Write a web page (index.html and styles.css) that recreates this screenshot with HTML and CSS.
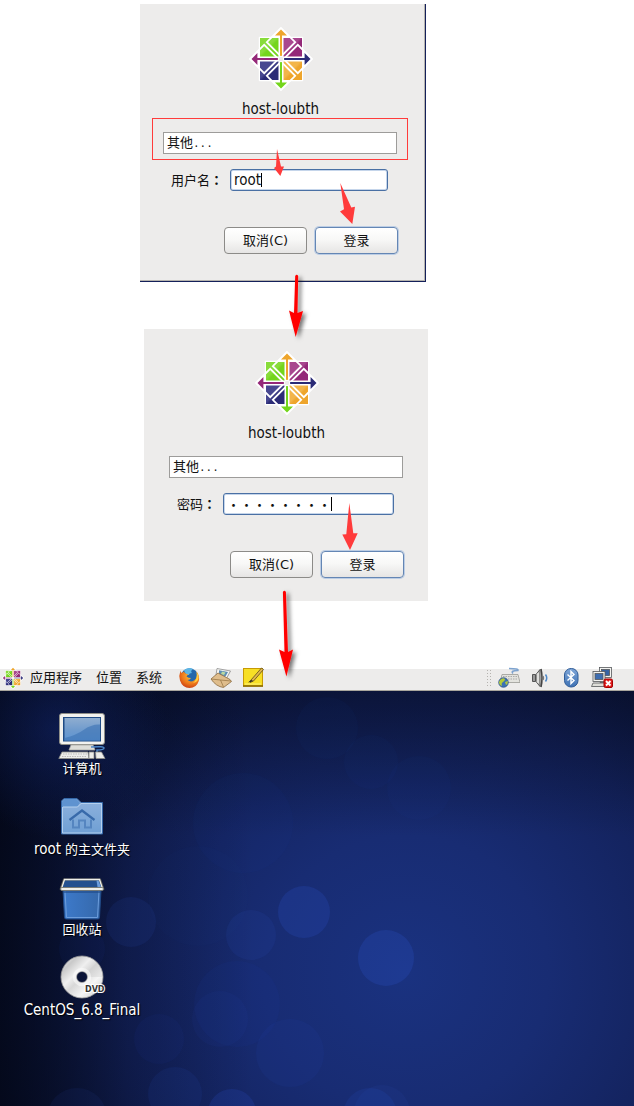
FILE: index.html
```html
<!DOCTYPE html>
<html lang="zh-CN">
<head>
<meta charset="utf-8">
<meta name="viewport" content="width=device-width, initial-scale=1">
<title>host-loubth</title>
<link rel="stylesheet" href="styles.css">
</head>
<body>
<svg class="defs" width="0" height="0" aria-hidden="true">
  <defs>
    <linearGradient id="g-green" x1="0" y1="0" x2="1" y2="1"><stop offset="0.45" stop-color="#88dc3a"/><stop offset="0.55" stop-color="#74d51c"/></linearGradient>
    <linearGradient id="g-purple" x1="0" y1="0" x2="1" y2="1"><stop offset="0.45" stop-color="#a8478f"/><stop offset="0.55" stop-color="#942878"/></linearGradient>
    <linearGradient id="g-navy" x1="0" y1="0" x2="1" y2="1"><stop offset="0.45" stop-color="#474790"/><stop offset="0.55" stop-color="#2b2b76"/></linearGradient>
    <linearGradient id="g-orange" x1="0" y1="0" x2="1" y2="1"><stop offset="0.45" stop-color="#f3b54a"/><stop offset="0.55" stop-color="#eea52c"/></linearGradient>
    <symbol id="centos" viewBox="-32 -32 64 64">
      <g fill="#fff" stroke="#fff" stroke-width="1.4" stroke-linejoin="round">
        <rect x="-21.5" y="-21.5" width="43" height="43"/>
        <path d="M0-30.5 30.5 0 0 30.5-30.5 0Z"/>
      </g>
      <rect x="-21" y="-21" width="18.5" height="18.5" fill="url(#g-green)"/>
      <rect x="2.5" y="-21" width="18.5" height="18.5" fill="url(#g-purple)"/>
      <rect x="-21" y="2.5" width="18.5" height="18.5" fill="url(#g-navy)"/>
      <rect x="2.5" y="2.5" width="18.5" height="18.5" fill="url(#g-orange)"/>
      <g fill="none" stroke="#fff" stroke-width="1.8">
        <path d="M0-31-14.2-16.8 0-2.6 14.2-16.8Z"/>
        <path d="M0 31-14.2 16.8 0 2.6 14.2 16.8Z"/>
        <path d="M-31 0-16.8-14.2-2.6 0-16.8 14.2Z"/>
        <path d="M31 0 16.8-14.2 2.6 0 16.8 14.2Z"/>
      </g>
      <path fill="#eea52c" d="M0-29.5 6-23.6H1V-3h-2v-20.6h-5Z"/>
      <path fill="#74d51c" d="M0 29.5 6 23.6H1V3h-2v20.6h-5Z"/>
      <path fill="#942878" d="M-29.5 0-23.6-6v5H-3v2h-20.6v5Z"/>
      <path fill="#2b2b76" d="M29.5 0 23.6-6v5H3v2h20.6v5Z"/>
      <circle r="2.8" fill="#edeceb" stroke="#fff"/>
    </symbol>
    <linearGradient id="g-screen" x1="0" y1="0" x2="0" y2="1"><stop offset="0" stop-color="#8fadd0"/><stop offset="0.55" stop-color="#6f9bcd"/><stop offset="1" stop-color="#5d95d4"/></linearGradient>
    <linearGradient id="g-folder" x1="0" y1="0" x2="0" y2="1"><stop offset="0" stop-color="#8fb2dd"/><stop offset="1" stop-color="#6f9fd4"/></linearGradient>
    <linearGradient id="g-bin" x1="0" y1="0" x2="1" y2="0"><stop offset="0" stop-color="#3d7acb"/><stop offset="1" stop-color="#3568aa"/></linearGradient>
    <linearGradient id="g-disc" x1="0" y1="0" x2="1" y2="1"><stop offset="0" stop-color="#f4f4f4"/><stop offset="0.2" stop-color="#c9c9c9"/><stop offset="0.38" stop-color="#efefef"/><stop offset="0.5" stop-color="#d8d8d8"/><stop offset="0.7" stop-color="#f5f5f5"/><stop offset="1" stop-color="#c4c4c4"/></linearGradient>
    <radialGradient id="g-fox" cx="0.6" cy="0.3" r="0.75"><stop offset="0" stop-color="#ffc53a"/><stop offset="0.6" stop-color="#ee7a1c"/><stop offset="1" stop-color="#c93b14"/></radialGradient>
    <linearGradient id="g-bt" x1="0" y1="0" x2="0" y2="1"><stop offset="0" stop-color="#7ea6d8"/><stop offset="1" stop-color="#3f72b4"/></linearGradient>
    <filter id="shadow" x="-100%" y="-10%" width="400%" height="130%"><feDropShadow dx="3" dy="2" stdDeviation="2" flood-color="#000" flood-opacity="0.55"/></filter>
  </defs>
</svg>

<main class="flow">
  <form class="dialog dialog-framed" onsubmit="return false">
    <svg class="logo" aria-hidden="true"><use href="#centos"/></svg>
    <h1 class="host">host-loubth</h1>
    <div class="user-pick marked">
      <button class="user-list" type="button">其他<span class="dots">...</span></button>
    </div>
    <div class="field-row">
      <label for="user">用户名<span class="colon" lang="zh-TW">：</span></label>
      <div class="field field-user">
        <input id="user" class="latin" type="text" value="root">
        <span class="caret caret-user"></span>
      </div>
    </div>
    <div class="actions">
      <button class="btn" type="button">取消(C)</button>
      <button class="btn btn-default" type="submit">登录</button>
    </div>
  </form>

  <form class="dialog" onsubmit="return false">
    <svg class="logo" aria-hidden="true"><use href="#centos"/></svg>
    <h2 class="host">host-loubth</h2>
    <div class="user-pick">
      <button class="user-list" type="button">其他<span class="dots">...</span></button>
    </div>
    <div class="field-row">
      <label for="pass">密码<span class="colon" lang="zh-TW">：</span></label>
      <div class="field field-pass">
        <input id="pass" class="secret" type="password" value="・・・・・・・・">
        <span class="caret caret-pass"></span>
      </div>
    </div>
    <div class="actions">
      <button class="btn" type="button">取消(C)</button>
      <button class="btn btn-default" type="submit">登录</button>
    </div>
  </form>

  <svg class="arrows" viewBox="0 0 634 700" aria-hidden="true">
    <g fill="#ff3b3b">
      <path d="M277 149 276 166.500 274 168 280.300 176 284 166.500 281 166.500Z"/>
      <path d="M340.300 183 344 209.300 340 211.500 352.300 224 355 206.700 351.300 207.500Z"/>
      <path d="M349.300 503 346.300 534.300 342.300 534.500 350 550 357.700 533.300 353.300 533.300Z"/>
    </g>
    <g fill="#f00" filter="url(#shadow)">
      <path d="M295.200 276q1.500-2.500 3 0L297.500 313 303 311 295.700 337 289 310.500 294 313Z"/>
      <path d="M282.900 592q1.500-2.500 3 0L288 652 293 649.500 286.400 676.500 279 649.500 284.500 652Z"/>
    </g>
  </svg>
</main>

<section class="session">
  <header class="panel">
    <nav class="menus">
      <svg class="menu-logo" aria-hidden="true"><use href="#centos"/></svg>
      <button class="menu" type="button">应用程序</button>
      <button class="menu" type="button">位置</button>
      <button class="menu" type="button">系统</button>
    </nav>
    <div class="launchers">
      <button class="launch" type="button" aria-label="Firefox">
        <svg viewBox="0 0 22 22"><circle cx="11.500" cy="10" r="8.800" fill="#2467ab"/><path d="M6 3q5-3.500 9-1-3 2-1 4-3 0-3 2-4 0-5-5z" fill="#5db5e4"/><path d="M2.500 3.500q-2 5-.5 10Q4.500 21 11.500 21 18.500 21 20.800 14 22 9 18.500 4.500 20 11 16 13.500 12.500 15.500 9.500 13 12 13 13 11 10.500 11 8.500 9.500 9 8 11 7.500 7 7 6 4.500 4.500 5 4 6 2.500 5.500 2.500 3.500Z" fill="url(#g-fox)"/><path d="M18.500 5Q20 12 15 16 18 16 20 13 21.500 8 18.500 5Z" fill="#ffcb3f"/></svg>
      </button>
      <button class="launch" type="button" aria-label="Mail">
        <svg viewBox="0 0 22 22"><path d="M7 1.500 20.500 4 16.500 11.500 6 8Z" fill="#f5f5f2" stroke="#8d8d8d" stroke-width=".8"/><path d="M9 3.200 18 5 15.500 9.500 9 7.500Z" fill="#5d8db5"/><path d="M12 4.500 15.500 5.500 14 8 11 7Z" fill="#b9d9a0"/><path d="M1 12 8 6 20 12.500 21.500 14.500 13.500 20.500Q6 19.500 1 12Z" fill="#dfbd8c" stroke="#8a6a3d" stroke-width=".8"/><path d="M1 12 10.500 13 21 14M10.500 13 13.500 20" fill="none" stroke="#9a7848" stroke-width=".8"/></svg>
      </button>
      <button class="launch" type="button" aria-label="Notes">
        <svg viewBox="0 0 22 22"><rect x="1.500" y="1.500" width="19" height="17.500" fill="#f7df25" stroke="#c79a04"/><path d="M1 19h20" stroke="#8b6b00" stroke-width="1.600"/><path d="M3 17h16" stroke="#fff27c"/><path d="M9 13 19.500 1 21.500 2.500 11.500 14 8 15.500Z" fill="#e0b64a" stroke="#5c4a1c" stroke-width=".8"/><path d="M6 15.500 9 13 11.500 14Z" fill="#222"/></svg>
      </button>
    </div>
    <div class="tray">
      <span class="grip"></span>
      <button class="launch" type="button" aria-label="Input method">
        <svg viewBox="0 0 22 22"><path d="M11 1.500q10 0 9 2-8 0-5 3" fill="none" stroke="#7da3cf" stroke-width="1.500"/><path d="M4 7.500h16l2 8H2z" fill="#e3e3de" stroke="#9b9b96" stroke-width=".8"/><path d="M5 9.500h15M5 12h15" stroke="#aaa" stroke-width="1.200" stroke-dasharray="1.500 1"/><circle cx="5.500" cy="15.500" r="4.800" fill="#3b72b5" stroke="#294f82" stroke-width=".7"/><path d="M2 13q3-3 5-1 0 2-2 3t-1 4q-3-1-3-4zM7 15l3-1q0 3-2 4z" fill="#b2c93c"/></svg>
      </button>
      <button class="launch" type="button" aria-label="Volume">
        <svg viewBox="0 0 22 22"><path d="M3.500 7.500h3V14.500h-3Z" fill="#999" stroke="#555"/><path d="M7 7.500 11 2.500v17L7 14.500Z" fill="#c8c8c4" stroke="#555" stroke-linejoin="round"/><path d="M9 6v10" stroke="#f5f5f5"/><path d="M12 2q2 9 0 18" fill="none" stroke="#444" stroke-width="1.600"/><path d="M14 9q1 2 0 4" fill="none" stroke="#777" stroke-width="1.500"/><path d="M16.500 7.500q2.500 3.500 0 7" fill="none" stroke="#4e88c7" stroke-width="1.500"/></svg>
      </button>
      <button class="launch" type="button" aria-label="Bluetooth">
        <svg viewBox="0 0 22 22"><rect x="4.500" y="1.500" width="13.500" height="18.500" rx="6.500" fill="url(#g-bt)" stroke="#2f5c98"/><path d="M7.500 7.500 14 13.500 11 16.500V4.500L14 7.500 7.500 13.500" fill="none" stroke="#fff" stroke-width="1.400"/></svg>
      </button>
      <button class="launch" type="button" aria-label="Network disconnected">
        <svg viewBox="0 0 22 22"><g stroke="#55585a" stroke-width=".8"><rect x="8.500" y="0.500" width="12" height="10" fill="#f3f3f0"/><rect x="10.500" y="2.500" width="8" height="6" fill="#3563a5"/><path d="M11 12.500h9l1 3H9z" fill="#deded9"/><rect x="2" y="4.500" width="12" height="10" fill="#f3f3f0"/><rect x="4" y="6.500" width="8" height="6" fill="#3e6db0"/><path d="M2 16h12l2 3.500H.5z" fill="#deded9"/></g><rect x="13" y="12" width="8.500" height="8.500" rx="1.500" fill="#e01b1b" stroke="#a40000"/><path d="M15 14 19.500 18.500M19.500 14 15 18.500" stroke="#fff" stroke-width="1.800"/></svg>
      </button>
    </div>
  </header>

  <div class="desktop">
    <svg class="bokeh" viewBox="0 0 634 415" preserveAspectRatio="xMinYMin slice" aria-hidden="true">
      <g fill="#2f55d0">
        <circle cx="304" cy="221" r="26" opacity=".2"/>
        <circle cx="386" cy="267" r="28" opacity=".22"/>
        <circle cx="251" cy="244" r="25" opacity=".1"/>
        <circle cx="131" cy="231" r="25" opacity=".1"/>
        <circle cx="237" cy="313" r="43" opacity=".05"/>
        <circle cx="220" cy="328" r="28" opacity=".06"/>
        <circle cx="290" cy="362" r="34" opacity=".07"/>
        <circle cx="175" cy="403" r="27" opacity=".09"/>
        <circle cx="232" cy="422" r="24" opacity=".18"/>
        <circle cx="370" cy="424" r="27" opacity=".13"/>
        <circle cx="382" cy="422" r="28" opacity=".08"/>
        <circle cx="159" cy="348" r="25" opacity=".05"/>
        <circle cx="77" cy="427" r="30" opacity=".08"/>
        <circle cx="82" cy="258" r="23" opacity=".05"/>
        <circle cx="243" cy="132" r="50" opacity=".03"/>
        <circle cx="198" cy="205" r="50" opacity=".02"/>
        <circle cx="327" cy="37" r="31" opacity=".03"/>
        <circle cx="371" cy="71" r="27" opacity=".03"/>
        <circle cx="419" cy="97" r="32" opacity=".03"/>
      </g>
    </svg>
    <div class="icons">
      <button class="shortcut" type="button">
        <svg class="shortcut-icon" viewBox="0 0 48 48" aria-hidden="true"><rect x="1.500" y="1.500" width="45" height="31" rx="2.500" fill="#f2f2ef" stroke="#8e8e88"/><rect x="5" y="5" width="38" height="24.500" fill="#1f4b85"/><rect x="6.500" y="6" width="35.500" height="22.500" fill="url(#g-screen)"/><path d="M6.500 26q12-3 19-8 8-6 16.500-5.500v16H6.500z" fill="#3f75b5" opacity=".65"/><path d="M13 33h22l2 5H11z" fill="#deded9" stroke="#a8a8a2" stroke-width=".8"/><path d="M33 35q13-1 13 1t-7 2v4" fill="none" stroke="#4c86c8" stroke-width="1.500"/><path d="M4 40h26l1 6.500H.8z" fill="#ededea" stroke="#8e8e88" stroke-width=".8"/><path d="M5 42h24M4 44.500h25" stroke="#bbb" stroke-width="1" stroke-dasharray="1.500 1"/><path d="M31 40h5v6.500h-5zM37.500 40h6l3.500 6.500h-9z" fill="#ededea" stroke="#8e8e88" stroke-width=".8"/></svg>
        <span>计算机</span>
      </button>
      <button class="shortcut" type="button">
        <svg class="shortcut-icon" viewBox="0 0 48 48" aria-hidden="true"><path d="M3.500 15 3.500 9 6 6.500h13L23 10.500h21.500v31.500h-41z" fill="url(#g-folder)" stroke="#3568a8"/><path d="M4 14V9.500L6.500 7h12L22 11 19 15H4z" fill="#5f93d0"/><path d="M5 15H19.500L23 11.500H43.500V41H4.500V15" fill="none" stroke="#b5d0ee"/><path d="M11.500 28 24 18.500 36.500 28" fill="none" stroke="#386aaa" stroke-width="2.200"/><path d="M15 27.500v8h6v-7h6v7h6v-8" fill="none" stroke="#5585c0" stroke-width="2"/></svg>
        <span><span class="latin">root</span> 的主文件夹</span>
      </button>
      <button class="shortcut" type="button">
        <svg class="shortcut-icon" viewBox="0 0 48 48" aria-hidden="true"><path d="M5 17h38l-1.500 27.500q0 1.500-2 1.500h-31q-2 0-2-1.500z" fill="url(#g-bin)" stroke="#204a87"/><path d="M7 18 8.500 44.500h31L41 18" fill="none" stroke="#6c9ddc"/><path d="M5 17h38v3H5z" fill="#204a87" opacity=".6"/><path d="M6 6.500h36l3 9h-42z" fill="#23508f" stroke="#5c5c55" stroke-width="2.200"/><path d="M6.500 6.500h35l3 9h-41z" fill="none" stroke="#efefea" stroke-width="1.300"/><path d="M38.500 7.500 40.500 7.500 43 14H39.500z" fill="#6c9ddc"/><rect x="2.500" y="14.500" width="43" height="3" rx="1.500" fill="#efefea" stroke="#6e6e66" stroke-width=".8"/></svg>
        <span>回收站</span>
      </button>
      <button class="shortcut" type="button">
        <svg class="shortcut-icon" viewBox="0 0 48 48" aria-hidden="true"><path fill-rule="evenodd" d="M24 3a21 21 0 1 1 0 42 21 21 0 1 1 0-42zM24 18.500a5.500 5.500 0 1 0 0 11 5.500 5.500 0 1 0 0-11z" fill="url(#g-disc)" stroke="#9a9a9a" stroke-width=".8"/><path d="M28.500 20 39 9.500A21 21 0 0 1 45 24L30 24Z" fill="#bdbdbd" opacity=".25"/><circle cx="24" cy="24" r="7.500" fill="none" stroke="#fff" stroke-width="3.500" opacity=".5"/><text class="disc-tag" x="27" y="39">DVD</text></svg>
        <span class="latin">CentOS_6.8_Final</span>
      </button>
    </div>
  </div>
</section>
</body>
</html>
```
FILE: styles.css
```css
*, *::before, *::after {
  box-sizing: border-box;
}

body {
  margin: 0;
  min-height: 100vh;
  display: flex;
  flex-direction: column;
  background: #fff;
  color: #111;
  font: 13px/18px "DejaVu Sans", "Noto Sans CJK SC", sans-serif;
}

button, input {
  font: inherit;
  color: inherit;
}

.defs {
  position: absolute;
}

.flow {
  position: relative;
  display: flex;
  flex-direction: column;
  align-items: flex-start;
  gap: 47px;
  padding: 4px 0 68px 140px;
}

.arrows {
  position: absolute;
  top: 0;
  left: 0;
  width: 634px;
  pointer-events: none;
  z-index: 2;
}

/* login dialogs */
.dialog {
  display: flex;
  flex-direction: column;
  width: 284px;
  margin-left: 4px;
  padding: 22px 24px 23px 25px;
  background: #edeceb;
}

.dialog-framed {
  width: 286px;
  margin-left: 0;
  padding: 23px 27px 27px 23px;
  border: solid #14205a;
  border-width: 0 1px 1px 0;
  box-shadow: inset -1px -1px 0 #b5b3ae;
}

.logo {
  align-self: center;
  width: 64px;
  height: 64px;
}

.host, .latin, .field .latin {
  font-family: "DejaVu Sans Condensed", "DejaVu Sans", sans-serif;
  font-size: 15px;
}

.host {
  margin: 9px 0 14px;
  text-align: center;
  font-weight: normal;
  line-height: 18px;
}

.user-pick {
  position: relative;
  margin-right: 1px;
}

.marked::before {
  content: "";
  position: absolute;
  inset: -14px -11px -6px;
  border: 1px solid #ff3b3b;
}

.user-list {
  display: block;
  position: relative;
  width: 100%;
  height: 22px;
  padding: 0 3px;
  border: 1px solid #9d9c9a;
  background: #fff;
  text-align: left;
}

.dots {
  font: 11px/18px "Liberation Mono", monospace;
}

.field-row {
  display: flex;
  align-items: center;
  gap: 7px;
  margin: 15px 10px 36px 8px;
}

.colon {
  font-family: "Noto Sans CJK TC", sans-serif;
  font-weight: bold;
}

.field {
  position: relative;
  flex: 1;
}

.field input {
  display: block;
  width: 100%;
  height: 22px;
  padding: 0 3px;
  border: 1px solid #4a70a4;
  border-radius: 3px;
  background: #fff;
  box-shadow: inset 0 0 0 1px #c5d5ea;
  outline: 0;
}

.field .secret {
  font-family: "Noto Sans CJK SC", sans-serif;
  -webkit-text-security: none;
}

.caret {
  position: absolute;
  top: 4px;
  width: 1px;
  height: 14px;
  background: #000;
}

.caret-user {
  left: 31px;
}

.caret-pass {
  left: 108px;
}

.actions {
  display: flex;
  justify-content: flex-end;
  gap: 8px;
}

.btn {
  width: 83px;
  height: 27px;
  padding: 0;
  border: 1px solid #8c8b88;
  border-radius: 4px;
  background: linear-gradient(#fff, #f8f8f7 45%, #e6e5e4);
}

.btn-default {
  border-color: #6486b4;
  box-shadow: 0 0 0 1px #bccde4;
}

/* desktop session */
.session {
  flex: 1;
  display: flex;
  flex-direction: column;
}

.panel {
  display: flex;
  align-items: center;
  height: 22px;
  padding: 0 21px 3px 2px;
  border-bottom: 1px solid #a9a69d;
  background: #edeceb;
}

.menus {
  display: flex;
  align-items: center;
  gap: 14px;
}

.menu-logo {
  width: 22px;
  height: 22px;
  margin-right: -8px;
}

.menu, .launch, .shortcut {
  padding: 0;
  border: 0;
  background: none;
}

.launchers {
  display: flex;
  gap: 10px;
  margin-left: 16px;
}

.launch {
  width: 22px;
  height: 22px;
}

.launch svg {
  display: block;
  width: 22px;
  height: 22px;
}

.tray {
  display: flex;
  align-items: center;
  gap: 9px;
  margin-left: auto;
}

.grip {
  width: 6px;
  height: 18px;
  margin-right: -3px;
  background: radial-gradient(circle, #b5b3af 1px, transparent 1px) 0 0 / 3px 3px;
}

.desktop {
  position: relative;
  flex: 1;
  min-height: 415px;
  overflow: hidden;
  background:
    radial-gradient(circle at 9% 9%, rgba(20, 42, 120, 0.5), transparent 110px),
    linear-gradient(90deg, rgba(2, 5, 18, 0.75), rgba(2, 5, 18, 0.25) 20%, transparent 40%),
    linear-gradient(rgba(2, 5, 18, 0.45), transparent 35%),
    radial-gradient(ellipse 75% 110% at 64% 68%, #1a3280 0%, #182c73 30%, #13225c 60%, #0c173e 85%, #081029 100%);
}

.bokeh {
  position: absolute;
  inset: 0;
  width: 100%;
  height: 100%;
}

.icons {
  position: relative;
  display: flex;
  flex-direction: column;
  align-items: center;
  gap: 14px;
  width: 164px;
  padding-top: 21px;
}

.shortcut {
  display: flex;
  flex-direction: column;
  align-items: center;
  color: #fff;
  text-shadow: 1px 1px 1px #000;
  white-space: nowrap;
}

.shortcut-icon {
  width: 48px;
  height: 48px;
}

.disc-tag {
  font: bold 8px "DejaVu Sans", sans-serif;
  fill: #333;
  stroke: #fff;
  stroke-width: 2px;
  paint-order: stroke;
  text-shadow: none;
}
```
